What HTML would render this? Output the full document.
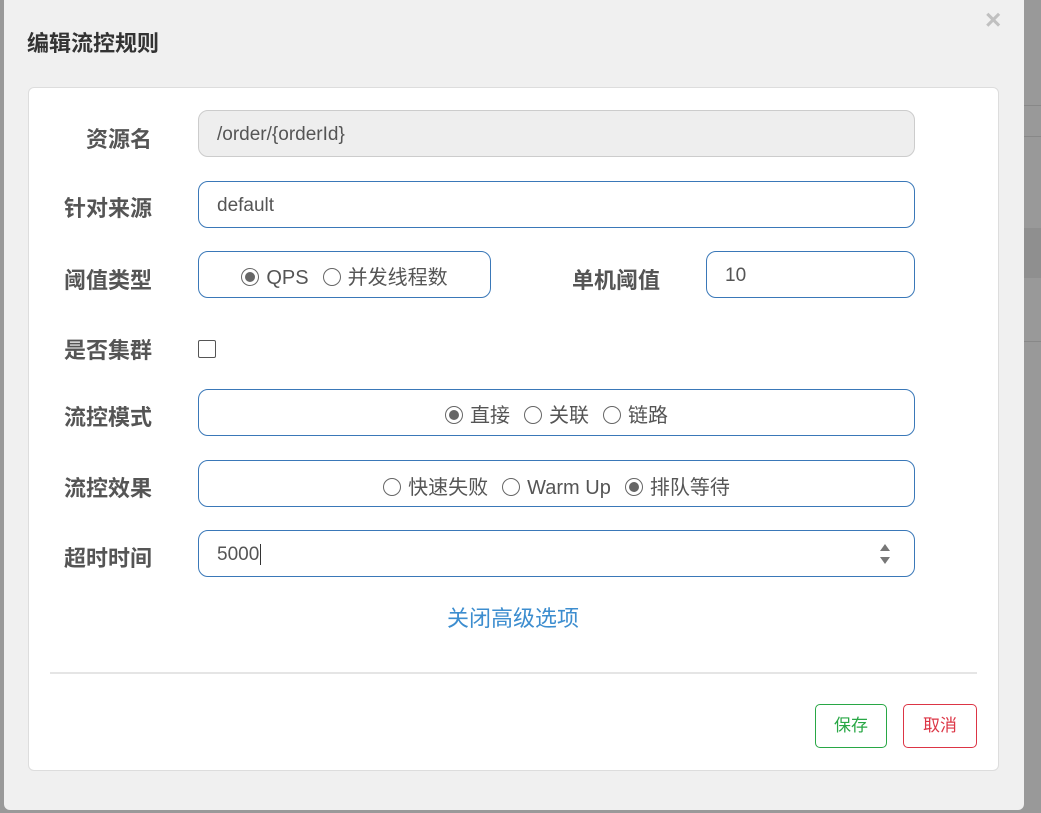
<!DOCTYPE html><html><head><meta charset="utf-8"><style>
body{margin:0;width:1041px;height:813px;background:#999;position:relative;overflow:hidden;font-family:"Liberation Sans","Noto Sans CJK SC",sans-serif;}
.modal{position:absolute;left:4px;top:-10px;width:1020px;height:820px;background:#f0f0f0;border-radius:6px;}
.title{position:absolute;left:27px;top:26px;font-size:22px;font-weight:bold;color:#333;}
.close{position:absolute;left:985px;top:4px;font-size:28px;color:#c0c0c0;font-weight:bold;}
.card{position:absolute;left:28px;top:87px;width:971px;height:684px;background:#fff;border:1px solid #ddd;border-radius:6px;box-sizing:border-box;}
.lbl{position:absolute;font-size:22px;font-weight:bold;color:#555;text-align:right;width:120px;}
.in{position:absolute;box-sizing:border-box;border:1px solid #3a78b8;border-radius:10px;font-size:19px;color:#555;padding-left:18px;line-height:47px;background:#fff;}
.ro{background:#eee;border-color:#ccc;}
.r{display:inline-block;width:18px;height:18px;border:1px solid #666;border-radius:50%;box-sizing:border-box;vertical-align:-2px;margin-right:7px;position:relative;}
.r.on::after{content:"";position:absolute;left:3px;top:3px;width:10px;height:10px;border-radius:50%;background:#666;}
.g{display:inline-block;width:14px;}
.c{text-align:center;padding-left:0;font-size:20px;}
.btn{position:absolute;top:704px;height:44px;width:72px;box-sizing:border-box;border-radius:5px;font-size:17px;text-align:center;line-height:42px;background:#fff;}
</style></head><body>
<div style="position:absolute;left:1024px;top:105px;width:17px;height:1px;background:#888"></div>
<div style="position:absolute;left:1024px;top:136px;width:17px;height:1px;background:#888"></div>
<div style="position:absolute;left:1024px;top:228px;width:17px;height:50px;background:#8f8f8f"></div>
<div style="position:absolute;left:1024px;top:341px;width:17px;height:1px;background:#888"></div>
<div class="modal"></div>
<div class="title">编辑流控规则</div>
<div class="close">×</div>
<div class="card"></div>
<div class="lbl" style="left:32px;top:122px">资源名</div>
<div class="in ro" style="left:198px;top:110px;width:717px;height:47px">/order/{orderId}</div>
<div class="lbl" style="left:32px;top:191px">针对来源</div>
<div class="in" style="left:198px;top:181px;width:717px;height:47px">default</div>
<div class="lbl" style="left:32px;top:263px">阈值类型</div>
<div class="in c" style="left:198px;top:251px;width:293px;height:47px;line-height:52px"><span class="r on"></span>QPS<span class="g"></span><span class="r"></span>并发线程数</div>
<div class="lbl" style="left:540px;top:263px">单机阈值</div>
<div class="in" style="left:706px;top:251px;width:209px;height:47px">10</div>
<div class="lbl" style="left:32px;top:333px">是否集群</div>
<div style="position:absolute;left:198px;top:340px;width:18px;height:18px;border:1px solid #555;border-radius:2px;box-sizing:border-box"></div>
<div class="lbl" style="left:32px;top:400px">流控模式</div>
<div class="in c" style="left:198px;top:389px;width:717px;height:47px;line-height:52px"><span class="r on"></span>直接<span class="g"></span><span class="r"></span>关联<span class="g"></span><span class="r"></span>链路</div>
<div class="lbl" style="left:32px;top:471px">流控效果</div>
<div class="in c" style="left:198px;top:460px;width:717px;height:47px;line-height:54px"><span class="r"></span>快速失败<span class="g"></span><span class="r"></span>Warm Up<span class="g"></span><span class="r on"></span>排队等待</div>
<div class="lbl" style="left:32px;top:541px">超时时间</div>
<div class="in" style="left:198px;top:530px;width:717px;height:47px">5000<span style="border-left:1px solid #333;margin-left:1px"></span>
<div style="position:absolute;right:24px;top:13px;width:0;height:0;border:5px solid transparent;border-bottom:7px solid #777;border-top:0"></div>
<div style="position:absolute;right:24px;top:26px;width:0;height:0;border:5px solid transparent;border-top:7px solid #777;border-bottom:0"></div></div>
<div style="position:absolute;left:0;width:1026px;top:601px;text-align:center;font-size:22px;color:#3c8dcf">关闭高级选项</div>
<div style="position:absolute;left:50px;top:672px;width:927px;height:2px;background:#e5e5e5"></div>
<div class="btn" style="left:815px;border:1px solid #28a745;color:#28a745">保存</div>
<div class="btn" style="left:903px;border:1px solid #dc3545;color:#dc3545;width:74px">取消</div>
</body></html>
